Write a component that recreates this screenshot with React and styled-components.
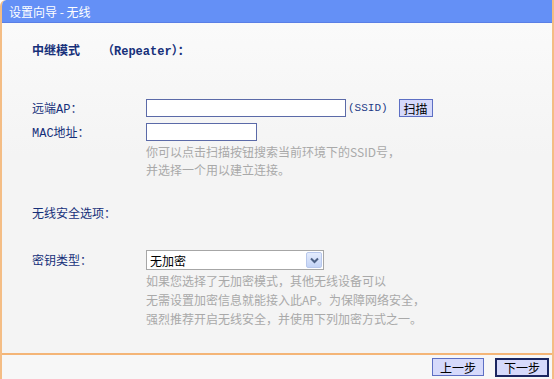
import React from 'react';
import styled, {createGlobalStyle} from 'styled-components';

const GlobalStyle = createGlobalStyle`
  html, body {
    margin: 0;
    padding: 0;
    background: #ffffff;
  }
  body {
    font-family: "Liberation Mono", "Noto Sans CJK SC", monospace;
    font-size: 12px;
  }
`;

const Frame = styled.div`
  width: 554px;
  height: 379px;
  box-sizing: border-box;
  display: flex;
  flex-direction: column;
  background: #f5f5f5;
  border-left: 2px solid #f4bd85;
  border-right: 2px solid #f4bd85;
  border-top-left-radius: 6px;
  overflow: hidden;
`;

const Header = styled.div`
  height: 22px;
  flex: none;
  margin: 0 -2px;
  padding-left: 9px;
  display: flex;
  align-items: center;
  background: #6490f6;
  border-bottom: 1px solid #5a7fe6;
  border-top-left-radius: 6px;
  color: #ffffff;
  font-family: "Noto Sans CJK SC", sans-serif;
  font-size: 12px;
`;

const Body = styled.div`
  flex: 1;
  padding: 20px 0 0 30px;
  background: linear-gradient(#fafafa, #f4f4f4 40%);
`;

const SectionTitle = styled.div`
  height: 18px;
  line-height: 18px;
  margin-top: ${p => p.$top}px;
  color: #16307a;
  font-weight: ${p => (p.$bold ? 'bold' : 'normal')};
  display: flex;
  gap: ${p => p.$gap || 0}px;
`;

const Row = styled.div`
  display: grid;
  grid-template-columns: 114px auto;
  align-items: center;
  height: ${p => p.$h}px;
  margin-top: ${p => p.$top}px;
`;

const Label = styled.span`
  color: #16307a;
`;

const Field = styled.div`
  display: flex;
  align-items: center;
`;

const TextBox = styled.div`
  width: ${p => p.$w}px;
  height: 18px;
  box-sizing: border-box;
  background: #ffffff;
  border: 1px solid #5b6aa8;
`;

const Suffix = styled.span`
  color: #1d3a86;
  font-size: 11px;
  margin-left: 2px;
`;

const Button = styled.div`
  height: ${p => (p.$focus ? 19 : 18)}px;
  box-sizing: border-box;
  padding: 0 ${p => p.$pad || 7}px;
  display: flex;
  align-items: center;
  justify-content: center;
  background: #d6dafb;
  border: ${p => (p.$focus ? '2px solid #1b2660' : '1px solid #5d6fc4')};
  color: #000000;
  font-family: "Noto Sans CJK SC", sans-serif;
  font-size: 12px;
  margin-left: ${p => p.$left || 0}px;
`;

const Hint = styled.div`
  margin: ${p => p.$top}px 0 0 114px;
  color: #a9a9a9;
  line-height: ${p => p.$lh}px;
  font-family: "Noto Sans CJK SC", sans-serif;
`;

const Select = styled.div`
  width: 178px;
  height: 20px;
  box-sizing: border-box;
  display: flex;
  align-items: center;
  justify-content: space-between;
  background: #ffffff;
  border: 1px solid #a6a6a6;
  padding-left: 3px;
  color: #000000;
  font-family: "Noto Sans CJK SC", sans-serif;
`;

const Arrow = styled.div`
  width: 16px;
  height: 16px;
  margin-right: 1px;
  box-sizing: border-box;
  display: flex;
  align-items: center;
  justify-content: center;
  border: 1px solid #b8c8ec;
  border-radius: 2px;
  background: linear-gradient(#e4ecfd, #c4d4f6);
`;

const Footer = styled.div`
  height: 24px;
  flex: none;
  border-top: 2px solid #f4b577;
  display: flex;
  align-items: center;
  justify-content: flex-end;
  padding-right: 3px;
  background: #f7f7f7;
`;

export default function App() {
  return (
    <>
      <GlobalStyle/>
      <Frame>
        <Header>设置向导 - 无线</Header>
        <Body>
          <SectionTitle $top={0} $bold $gap={22}>
            <span>中继模式</span>
            <span>（Repeater）：</span>
          </SectionTitle>

          <Row $top={38} $h={18}>
            <Label>远端AP：</Label>
            <Field>
              <TextBox $w={200}/>
              <Suffix>(SSID)</Suffix>
              <Button $left={11} $pad={4}>扫描</Button>
            </Field>
          </Row>
          <Row $top={6} $h={18}>
            <Label>MAC地址：</Label>
            <Field>
              <TextBox $w={111}/>
            </Field>
          </Row>
          <Hint $top={2} $lh={18}>
            你可以点击扫描按钮搜索当前环境下的SSID号，<br/>
            并选择一个用以建立连接。
          </Hint>

          <SectionTitle $top={27}>无线安全选项：</SectionTitle>

          <Row $top={26} $h={20}>
            <Label>密钥类型：</Label>
            <Field>
              <Select>
                无加密
                <Arrow>
                  <svg width="9" height="7" viewBox="0 0 9 7">
                    <path d="M1 1.5 L4.5 5 L8 1.5" fill="none" stroke="#4d6185" strokeWidth="2"/>
                  </svg>
                </Arrow>
              </Select>
            </Field>
          </Row>
          <Hint $top={1} $lh={19}>
            如果您选择了无加密模式，其他无线设备可以<br/>
            无需设置加密信息就能接入此AP。为保障网络安全，<br/>
            强烈推荐开启无线安全，并使用下列加密方式之一。
          </Hint>
        </Body>
        <Footer>
          <Button>上一步</Button>
          <Button $focus $left={11}>下一步</Button>
        </Footer>
      </Frame>
    </>
  );
}
